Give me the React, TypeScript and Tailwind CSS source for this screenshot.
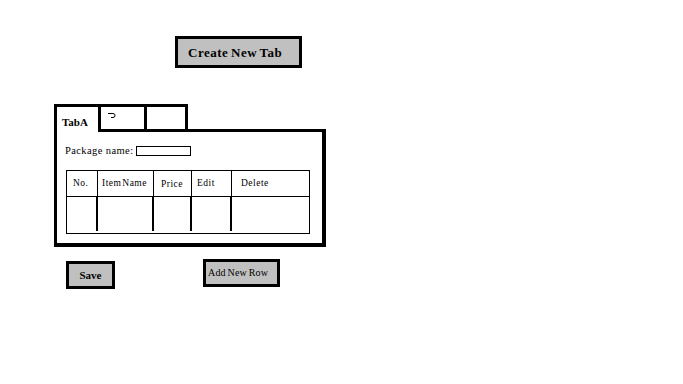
const headers = [
  { label: 'No.', w: 'w-[31px]', pad: 'pl-[6px]' },
  { label: 'Item Name', w: 'w-[56px]', pad: 'pl-[4px]' },
  { label: 'Price', w: 'w-[38px]', pad: 'pl-[7px] pt-[2px]' },
  { label: 'Edit', w: 'w-[40px]', pad: 'pl-[5px] pt-[1px]' },
  { label: 'Delete', w: 'flex-1', pad: 'pl-[9px]' },
];

function Squiggle() {
  return (
    <svg width="10" height="8" viewBox="0 0 10 8" className="mt-[5px] ml-[6px]">
      <path d="M1 1.5 H6 Q8 1.5 8 3.5 Q8 5.5 6 5.5 H4" fill="none" stroke="#000" strokeWidth="1" />
    </svg>
  );
}

export default function App() {
  return (
    <div className="w-[683px] h-[384px] bg-white overflow-hidden font-['Liberation_Serif',serif] text-black">
      <div className="pt-[36px] pl-[175px]">
        <button className="w-[127px] h-[32px] border-[3px] border-black bg-[#c0c0c0] pl-[10px] text-left text-[13px] font-bold tracking-[0.5px] [word-spacing:-1px] leading-none">
          Create New Tab
        </button>
      </div>

      <div className="mt-[36px] ml-[54px] w-[272px]">
        <div className="flex h-[28px]">
          <div className="w-[47px] border-t-[3px] border-l-[3px] border-r-[3px] border-black pl-[5px] pt-[10px] text-[11px] font-bold leading-none [word-spacing:-2px]">
            Tab A
          </div>
          <div className="w-[46px] border-t-[3px] border-r-[3px] border-b-[3px] border-black">
            <Squiggle />
          </div>
          <div className="w-[41px] border-t-[3px] border-r-[3px] border-b-[3px] border-black" />
          <div className="flex-1 border-b-[3px] border-black" />
        </div>

        <div className="h-[115px] border-l-[3px] border-r-[4px] border-b-[4px] border-black pl-[8px] pt-[14px]">
          <div className="flex items-center h-[10px]">
            <span className="text-[10.5px] tracking-[0.4px] leading-none">Package name:</span>
            <div className="ml-[3px] w-[55px] h-[10px] border border-black" />
          </div>

          <div className="mt-[14px] ml-[1px] w-[244px] h-[64px] border border-black flex flex-col">
            <div className="flex h-[26px] border-b border-black">
              {headers.map((h, i) => (
                <div
                  key={h.label}
                  className={`${h.w} ${h.pad} ${i < headers.length - 1 ? 'border-r border-black' : ''} flex items-center text-[9.5px] tracking-[0.5px] [word-spacing:-2px] leading-none`}
                >
                  {h.label}
                </div>
              ))}
            </div>
            <div className="flex flex-1">
              {headers.map((h, i) => (
                <div
                  key={h.label}
                  className={`${h.w} ${i < headers.length - 1 ? 'border-r-2 border-black' : ''} mb-[2px]`}
                />
              ))}
            </div>
          </div>
        </div>
      </div>

      <div className="flex items-start mt-[14px] ml-[66px]">
        <button className="w-[49px] h-[28px] border-[3px] border-black bg-[#c0c0c0] text-[11px] font-bold leading-none">
          Save
        </button>
        <button className="ml-[88px] -mt-[2px] w-[77px] h-[28px] border-[3px] border-black bg-[#c0c0c0] pl-[2px] text-left text-[10px] tracking-[0.2px] [word-spacing:-1px] leading-none">
          Add New Row
        </button>
      </div>
    </div>
  );
}
